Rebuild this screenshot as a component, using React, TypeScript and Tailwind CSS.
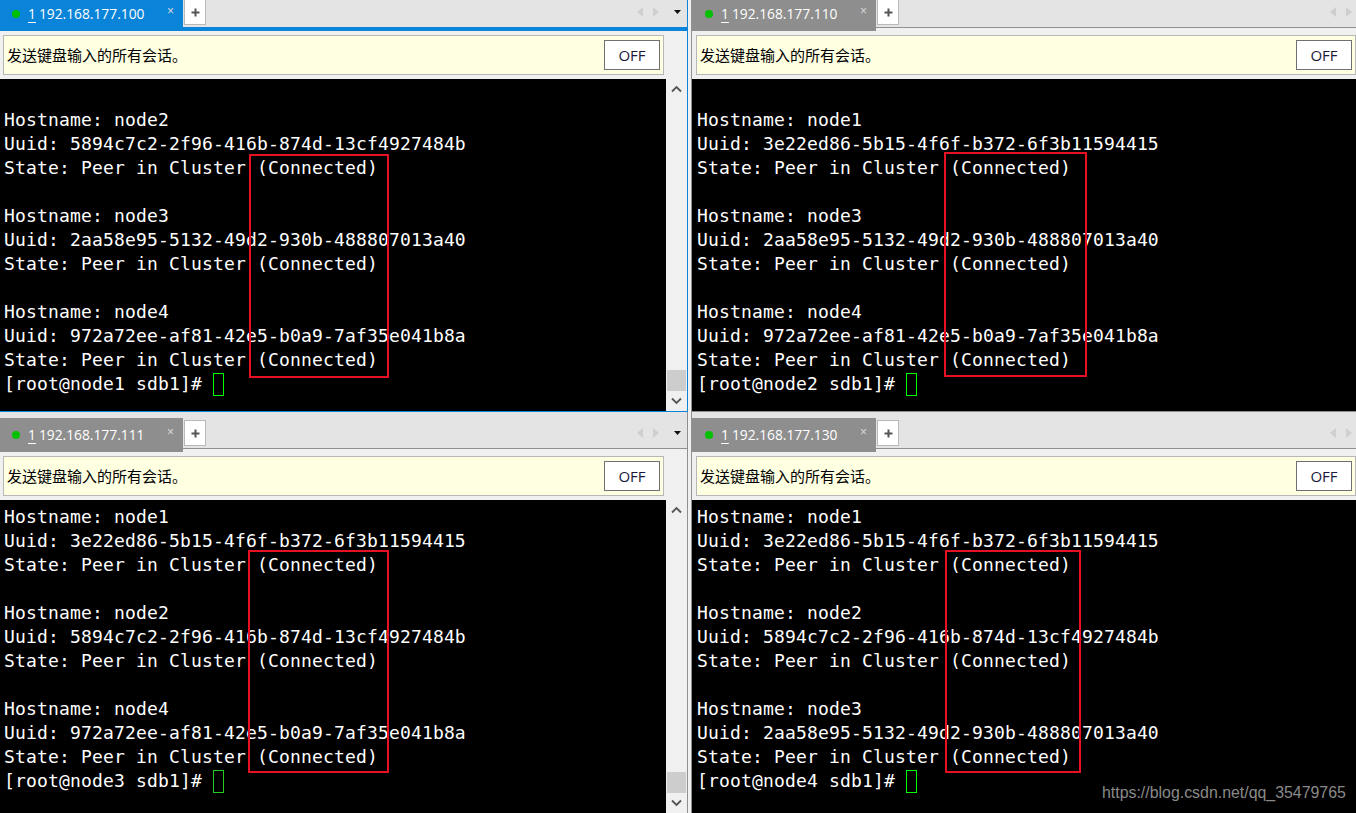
const mono = "font-['DejaVu_Sans_Mono','Liberation_Mono',monospace] text-[18px] leading-[24px] tracking-[0.16px] text-white";

type PaneData = {
  ip: string;
  active?: boolean;
  bottom?: boolean;
  right?: boolean;
  cursorColor?: string;
  cursor: string;
  lines: string[];
};

function Chevron({ up }: { up?: boolean }) {
  return (
    <svg width="11" height="8" viewBox="0 0 11 8" fill="none">
      <polyline
        points={up ? "1,6.5 5.5,2 10,6.5" : "1,1.5 5.5,6 10,1.5"}
        stroke="#555555"
        strokeWidth="1.8"
      />
    </svg>
  );
}

function TabArrows() {
  return (
    <div className="mb-[10px] ml-auto mr-[6px] flex h-[10px] items-center">
      <svg width="6" height="10" viewBox="0 0 6 10" className="mr-[10px]">
        <polygon points="6,0 0,5 6,10" fill="#cfcfcf" />
      </svg>
      <svg width="6" height="10" viewBox="0 0 6 10" className="mr-[15px]">
        <polygon points="0,0 6,5 0,10" fill="#cfcfcf" />
      </svg>
      <svg width="7" height="4" viewBox="0 0 7 4">
        <polygon points="0,0 7,0 3.5,4" fill="#111111" />
      </svg>
    </div>
  );
}

function Pane({ ip, active, bottom, right, cursor, cursorColor, lines }: PaneData) {
  const frame = active
    ? "border-r-[#0a84d8] border-b border-b-[#0a84d8]"
    : bottom
      ? "border-r-[#8f8f8f]"
      : "border-r-[#8f8f8f] border-b border-b-[#8f8f8f]";
  return (
    <section
      className={`flex w-[690px] shrink-0 flex-col border-r border-l border-l-[#8f8f8f] bg-[#f0f0f0] ${frame} ${bottom ? "h-[401px]" : "h-[412px]"}`}
    >
      <div className={`flex items-end bg-[#e4e4e4] ${bottom ? "h-[36px]" : "h-[27px]"}`}>
        <div
          className={`relative z-10 -mb-[4px] flex w-[184px] shrink-0 items-end pl-[13px] font-['Open_Sans',sans-serif] text-[13.8px] text-white ${active ? "bg-[#0a84d8]" : "bg-[#8e8e8e]"} ${bottom ? "h-[34px]" : "h-[31px]"}`}
        >
          <div className="mb-[7px] flex h-[20px] w-full items-center">
            <span className="h-[8px] w-[8px] rounded-full bg-[#00c000]" />
            <span className="ml-[8px] underline underline-offset-[3px]">1</span>
            <span className="ml-[3px]">{ip}</span>
            <span className="ml-auto mr-[9px] -mt-[6px] font-['Liberation_Sans',sans-serif] text-[12px] text-[#d8d8d8]">×</span>
          </div>
        </div>
        <div className="mb-[2px] ml-px flex h-[26px] w-[22px] items-center justify-center border border-[#b8b8b8] bg-white">
          <svg width="9" height="9" viewBox="0 0 9 9">
            <path d="M4.5 0.5v8M0.5 4.5h8" stroke="#555555" strokeWidth="2" />
          </svg>
        </div>
        <TabArrows />
      </div>
      <div className={`h-[4px] ${active ? "bg-[#0a84d8]" : "border-t border-[#8f8f8f] bg-[#f0f0f0]"}`} />
      <div className="flex h-[48px] items-center pl-[4px]">
        <div className={`flex h-[40px] items-center justify-between border border-[#b7b7b7] bg-[#ffffe1] pl-[3px] pr-[3px] ${right ? "w-[660px]" : "w-[661px]"}`}>
          <span className="font-['Noto_Sans_CJK_SC',sans-serif] text-[15px] text-black">发送键盘输入的所有会话。</span>
          <button className="flex h-[30px] w-[56px] items-center justify-center border border-[#707070] bg-white font-['Open_Sans',sans-serif] text-[15px] text-[#1a1a3a]">
            OFF
          </button>
        </div>
      </div>
      <div className="flex min-h-0 flex-1">
        <div className={`w-[667px] overflow-hidden whitespace-pre bg-black pl-[5px] pt-[5px] ${mono}`}>
          {lines.map((l, i) => (
            <div key={i} className="h-[24px]">{l}</div>
          ))}
          <div className="flex h-[24px] items-center">
            <span>{cursor}</span>
            <span className={`ml-[11px] h-[23px] w-[11px] border ${cursorColor ?? "border-[#00ff00]"}`} />
          </div>
        </div>
        <div className="flex w-[21px] flex-col items-center">
          <div className="flex h-[20px] items-center justify-center"><Chevron up /></div>
          <div className="flex-1" />
          <div className="h-[21px] w-[19px] bg-[#cdcdcd]" />
          <div className="flex h-[20px] items-center justify-center"><Chevron /></div>
        </div>
      </div>
    </section>
  );
}

const node = (n: string, u: string) => [`Hostname: ${n}`, `Uuid: ${u}`, "State: Peer in Cluster (Connected)"];
const n1 = node("node1", "3e22ed86-5b15-4f6f-b372-6f3b11594415");
const n2 = node("node2", "5894c7c2-2f96-416b-874d-13cf4927484b");
const n3 = node("node3", "2aa58e95-5132-49d2-930b-488807013a40");
const n4 = node("node4", "972a72ee-af81-42e5-b0a9-7af35e041b8a");
const join = (...g: string[][]) => g.flatMap((x, i) => (i ? ["", ...x] : x));

export default function App() {
  return (
    <div className="relative h-[813px] w-[1356px] overflow-hidden bg-[#f0f0f0]">
      <div className="flex gap-[3px]">
        <div className="-ml-[2px]">
          <Pane ip="192.168.177.100" active cursor="[root@node1 sdb1]#" lines={["", ...join(n2, n3, n4)]} />
        </div>
        <Pane right ip="192.168.177.110" cursor="[root@node2 sdb1]#" lines={["", ...join(n1, n3, n4)]} />
      </div>
      <div className="flex gap-[3px]">
        <div className="-ml-[2px]">
          <Pane bottom ip="192.168.177.111" cursor="[root@node3 sdb1]#" cursorColor="border-[#22cc22]" lines={join(n1, n2, n4)} />
        </div>
        <Pane bottom right ip="192.168.177.130" cursor="[root@node4 sdb1]#" lines={join(n1, n2, n3)} />
      </div>

      <div className="absolute left-[249px] top-[154px] h-[224px] w-[140px] border-2 border-[#e81123]" />
      <div className="absolute left-[944px] top-[152px] h-[225px] w-[143px] border-2 border-[#e81123]" />
      <div className="absolute left-[248px] top-[550px] h-[223px] w-[141px] border-2 border-[#e81123]" />
      <div className="absolute left-[945px] top-[550px] h-[223px] w-[136px] border-2 border-[#e81123]" />

      <div className="absolute left-[1102px] top-[784px] font-['Liberation_Sans',sans-serif] text-[15.9px] leading-[18px] text-[#8a8a8a]">
        https://blog.csdn.net/qq_35479765
      </div>
    </div>
  );
}
